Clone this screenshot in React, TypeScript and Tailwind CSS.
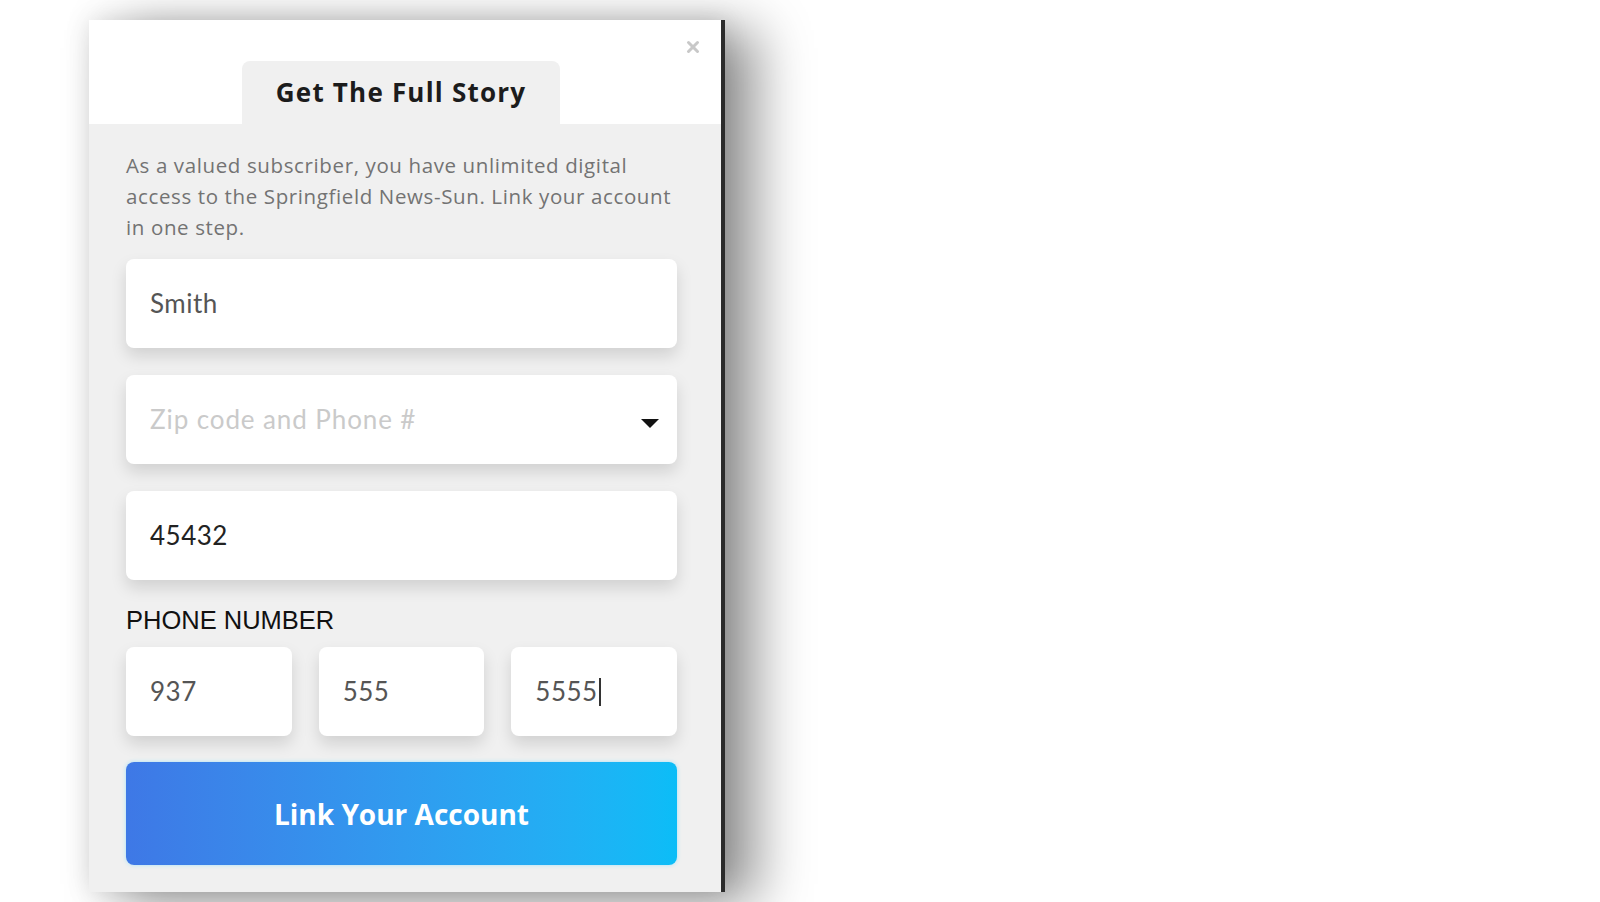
import { X } from "lucide-react";

const FIELD =
  "flex items-center h-[89px] rounded-lg bg-white pl-6 text-[26px] tracking-[0.5px] shadow-[0_8px_16px_rgba(0,0,0,0.13)]";

function PhoneBox({ value, caret }: { value: string; caret?: boolean }) {
  return (
    <div className={`${FIELD} text-[#555]`}>
      <span>{value}</span>
      {caret && <span className="ml-px h-[28px] w-[2px] bg-[#333]" />}
    </div>
  );
}

export default function App() {
  return (
    <div className="min-h-[902px] w-full bg-white pl-[89px] pt-[20px] font-['Lato',sans-serif]">
      <div className="relative w-[636px] h-[872px] border-r-4 border-[#2b2b2b] bg-[#f0f0f0] shadow-[32px_10px_50px_rgba(0,0,0,0.42),0_0_24px_rgba(0,0,0,0.12)]">
        <header className="relative flex h-[104px] items-end bg-white pl-[153px]">
          <button className="absolute right-[19px] top-[18px] text-[#c8c8c8]">
            <X size={18} strokeWidth={4} />
          </button>
          <div className="flex h-[63px] w-[318px] items-center justify-center rounded-t-lg bg-[#f0f0f0]">
            <h1 className="font-['Open_Sans',sans-serif] text-[26px] font-bold tracking-[1.2px] text-[#1c1c1c]">
              Get The Full Story
            </h1>
          </div>
        </header>

        <div className="pl-[37px] pr-[44px] pt-[26px]">
          <p className="whitespace-nowrap font-['Open_Sans',sans-serif] text-[20.5px] leading-[31px] tracking-[0.62px] text-[#737373]">
            As a valued subscriber, you have unlimited digital
            <br />
            access to the Springfield News-Sun. Link your account
            <br />
            in one step.
          </p>

          <div className="mt-[16px] flex flex-col gap-[27px]">
            <div className={`${FIELD} text-[#555]`}>Smith</div>
            <div className={`${FIELD} justify-between pr-[17px] text-[#cacaca]`}>
              <span className="tracking-[0.9px]">Zip code and Phone #</span>
              <svg width="20" height="12" viewBox="0 0 20 12" className="mt-[8px]">
                <path d="M1 1 L19 1 L10 10 Z" fill="#111" />
              </svg>
            </div>
            <div className={`${FIELD} text-[#222]`}>45432</div>
          </div>

          <div className="mt-[25px] font-['Liberation_Sans',sans-serif] text-[25.5px] leading-[30px] text-[#111]">
            PHONE NUMBER
          </div>

          <div className="mt-[12px] grid grid-cols-3 gap-[27px]">
            <PhoneBox value="937" />
            <PhoneBox value="555" />
            <PhoneBox value="5555" caret />
          </div>

          <button className="mt-[26px] flex h-[103px] w-full items-center justify-center rounded-lg bg-gradient-to-r from-[#3e78e6] to-[#0bbdf7] font-['Open_Sans',sans-serif] text-[28px] font-bold text-white shadow-[0_0_4px_rgba(120,220,255,0.6)]">
            Link Your Account
          </button>
        </div>
      </div>
    </div>
  );
}
